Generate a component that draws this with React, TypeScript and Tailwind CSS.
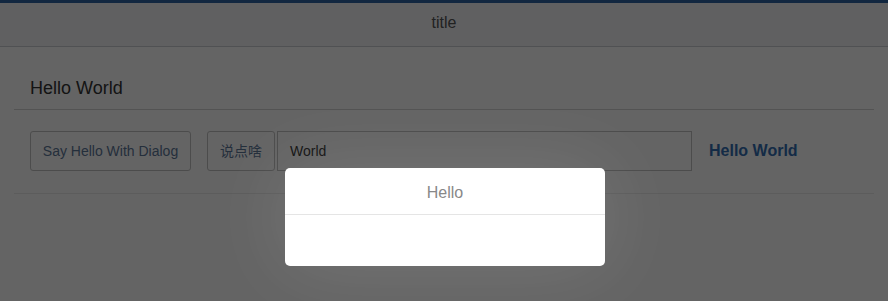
import React from "react";

export default function App() {
  return (
    <div className="relative h-[301px] overflow-hidden bg-[#fafafa] font-['Liberation_Sans',Arial,sans-serif]">
      <header className="flex h-[47px] items-center justify-center border-t-[3px] border-b border-t-[#2f63a0] border-b-[#c9cbcf] bg-[#eff0f2] pb-[4px] text-[16px] text-[#555]">
        title
      </header>
      <div className="mx-[14px]">
        <div className="border-b border-[#cfcfcf] pl-[16px] pt-[31px] pb-[11px] text-[18px] leading-[20px] text-[#333]">
          Hello World
        </div>
        <div className="flex items-center border-b border-[#e6e6e6] pl-[16px] pt-[21px] pb-[22px]">
          <button className="h-[40px] w-[161px] rounded-[3px] border border-[#bdbdbd] text-[14px] text-[#5b7596]">
            Say Hello With Dialog
          </button>
          <button className="ml-[16px] h-[40px] w-[68px] rounded-[3px] border border-[#bdbdbd] text-[14px] text-[#5b7596] font-['Liberation_Sans','Noto_Sans_CJK_SC',sans-serif]">
            说点啥
          </button>
          <div className="ml-[2px] flex h-[40px] w-[415px] items-center border border-[#bdbdbd] pl-[12px] text-[14px] text-[#333]">
            World
          </div>
          <div className="ml-[17px] text-[16px] font-bold text-[#336db0]">Hello World</div>
        </div>
      </div>
      <div className="absolute inset-0 bg-[rgba(0,0,0,0.6)]" />
      <div className="absolute left-[285px] top-[168px] w-[320px] rounded-[5px] bg-white shadow-[0_0_80px_rgba(255,255,255,0.12)]">
        <div className="flex h-[47px] items-center justify-center border-b border-[#e5e5e5] pt-[3px] text-[16px] text-[#888]">
          Hello
        </div>
        <div className="h-[51px]" />
      </div>
    </div>
  );
}
